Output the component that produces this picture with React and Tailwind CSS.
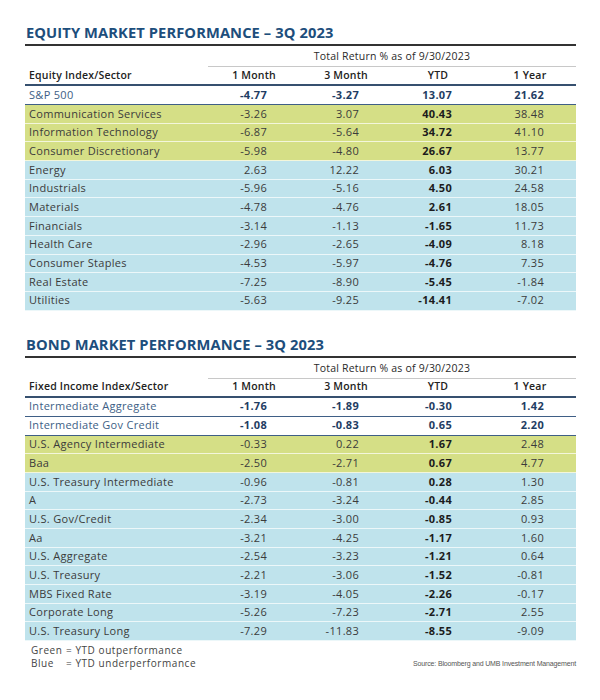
import React from "react";

const equity = [
  ["S&P 500", "-4.77", "-3.27", "13.07", "21.62", "h"],
  ["Communication Services", "-3.26", "3.07", "40.43", "38.48", "g"],
  ["Information Technology", "-6.87", "-5.64", "34.72", "41.10", "g"],
  ["Consumer Discretionary", "-5.98", "-4.80", "26.67", "13.77", "g"],
  ["Energy", "2.63", "12.22", "6.03", "30.21", "b"],
  ["Industrials", "-5.96", "-5.16", "4.50", "24.58", "b"],
  ["Materials", "-4.78", "-4.76", "2.61", "18.05", "b"],
  ["Financials", "-3.14", "-1.13", "-1.65", "11.73", "b"],
  ["Health Care", "-2.96", "-2.65", "-4.09", "8.18", "b"],
  ["Consumer Staples", "-4.53", "-5.97", "-4.76", "7.35", "b"],
  ["Real Estate", "-7.25", "-8.90", "-5.45", "-1.84", "b"],
  ["Utilities", "-5.63", "-9.25", "-14.41", "-7.02", "b"],
];

const bond = [
  ["Intermediate Aggregate", "-1.76", "-1.89", "-0.30", "1.42", "h"],
  ["Intermediate Gov Credit", "-1.08", "-0.83", "0.65", "2.20", "h"],
  ["U.S. Agency Intermediate", "-0.33", "0.22", "1.67", "2.48", "g"],
  ["Baa", "-2.50", "-2.71", "0.67", "4.77", "g"],
  ["U.S. Treasury Intermediate", "-0.96", "-0.81", "0.28", "1.30", "b"],
  ["A", "-2.73", "-3.24", "-0.44", "2.85", "b"],
  ["U.S. Gov/Credit", "-2.34", "-3.00", "-0.85", "0.93", "b"],
  ["Aa", "-3.21", "-4.25", "-1.17", "1.60", "b"],
  ["U.S. Aggregate", "-2.54", "-3.23", "-1.21", "0.64", "b"],
  ["U.S. Treasury", "-2.21", "-3.06", "-1.52", "-0.81", "b"],
  ["MBS Fixed Rate", "-3.19", "-4.05", "-2.26", "-0.17", "b"],
  ["Corporate Long", "-5.26", "-7.23", "-2.71", "2.55", "b"],
  ["U.S. Treasury Long", "-7.29", "-11.83", "-8.55", "-9.09", "b"],
];

const grid = "grid grid-cols-[183px_92px_92px_92px_92px]";

function Row({ r }) {
  const [label, a, b, c, d, t] = r;
  if (t === "h") {
    return (
      <div className={`${grid} h-[19px] items-center border-b-[1.5px] border-[#3f5f86]`}>
        <div className="pl-[4px] text-[#3d5e85]">{label}</div>
        <div className="text-right pr-[33px] font-bold text-[#1f3d63]">{a}</div>
        <div className="text-right pr-[33px] font-bold text-[#1f3d63]">{b}</div>
        <div className="text-right pr-[32px] font-bold text-[#1f3d63]">{c}</div>
        <div className="text-right pr-[32px] font-bold text-[#1f3d63]">{d}</div>
      </div>
    );
  }
  const bg = t === "g" ? "bg-[#d5df86]" : "bg-[#bfe3ec]";
  return (
    <div className={`${grid} h-[18.7px] items-center border-b border-white/70 ${bg} text-[#3b3b3b]`}>
      <div className="pl-[4px]">{label}</div>
      <div className="text-right pr-[33px]">{a}</div>
      <div className="text-right pr-[33px]">{b}</div>
      <div className="text-right pr-[32px] font-bold text-[#1c1c1c]">{c}</div>
      <div className="text-right pr-[32px]">{d}</div>
    </div>
  );
}

function Table({ title, first, rows }) {
  return (
    <div>
      <div className="h-[26px] border-b-2 border-[#333] text-[14.7px] font-bold leading-[24px] tracking-[0.1px] text-[#1d4e7c] pl-[1px]">
        {title}
      </div>
      <div className={`${grid} h-[21px]`}>
        <div />
        <div className="col-span-4 flex items-center justify-center border-b border-[#c8c8c8] pt-[2px] text-[10.5px] tracking-[0.2px] text-[#2a2a2a]">
          Total Return % as of 9/30/2023
        </div>
      </div>
      <div className={`${grid} h-[19px] items-center border-b-2 border-[#36506f] text-[10.5px] font-semibold tracking-[0.2px] text-[#222]`}>
        <div className="pl-[4px]">{first}</div>
        <div className="text-center">1 Month</div>
        <div className="text-center">3 Month</div>
        <div className="text-center">YTD</div>
        <div className="text-center">1 Year</div>
      </div>
      {rows.map((r) => (
        <Row key={r[0]} r={r} />
      ))}
    </div>
  );
}

export default function App() {
  return (
    <div
      className="w-[600px] h-[700px] bg-white pl-[25px] pr-[24px] pt-[20px] text-[11px] tracking-[0.3px]"
      style={{ fontFamily: '"Open Sans", "Noto Sans", sans-serif' }}
    >
      <Table title="EQUITY MARKET PERFORMANCE – 3Q 2023" first="Equity Index/Sector" rows={equity} />
      <div className="h-[21px]" />
      <Table title="BOND MARKET PERFORMANCE – 3Q 2023" first="Fixed Income Index/Sector" rows={bond} />
      <div className="flex items-start justify-between pt-[3px]">
        <div className="pl-[6px] text-[10px] leading-[13px] tracking-[0.55px] text-[#444]">
          <div className="flex whitespace-nowrap"><span className="w-[35px]">Green</span><span>= YTD outperformance</span></div>
          <div className="flex whitespace-nowrap"><span className="w-[35px]">Blue</span><span>= YTD underperformance</span></div>
        </div>
        <div
          className="pt-[15px] text-[7px] leading-[9px] tracking-[-0.15px] text-[#555]"
          style={{ fontFamily: '"Liberation Sans", sans-serif' }}
        >
          Source: Bloomberg and UMB Investment Management
        </div>
      </div>
    </div>
  );
}
